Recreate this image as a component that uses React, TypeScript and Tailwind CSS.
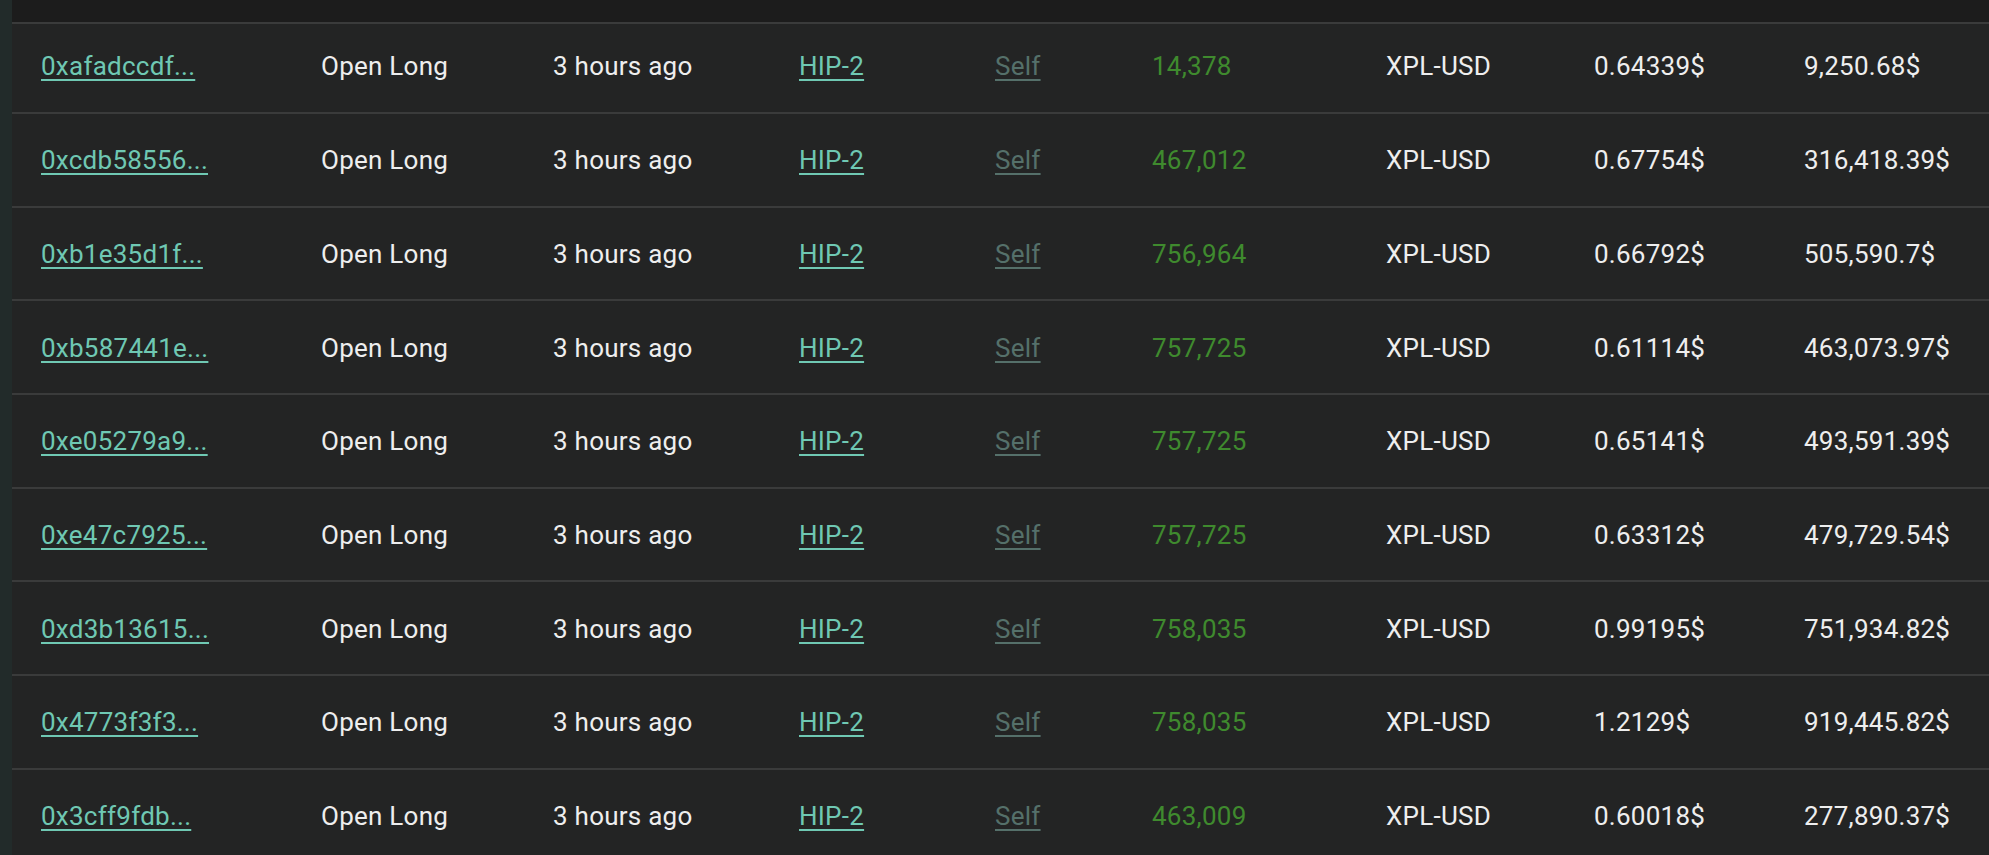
import React from "react";

type Row = {
  addr: string;
  size: string;
  price: string;
  total: string;
};

const rows: Row[] = [
  { addr: "0xafadccdf...", size: "14,378", price: "0.64339$", total: "9,250.68$" },
  { addr: "0xcdb58556...", size: "467,012", price: "0.67754$", total: "316,418.39$" },
  { addr: "0xb1e35d1f...", size: "756,964", price: "0.66792$", total: "505,590.7$" },
  { addr: "0xb587441e...", size: "757,725", price: "0.61114$", total: "463,073.97$" },
  { addr: "0xe05279a9...", size: "757,725", price: "0.65141$", total: "493,591.39$" },
  { addr: "0xe47c7925...", size: "757,725", price: "0.63312$", total: "479,729.54$" },
  { addr: "0xd3b13615...", size: "758,035", price: "0.99195$", total: "751,934.82$" },
  { addr: "0x4773f3f3...", size: "758,035", price: "1.2129$", total: "919,445.82$" },
  { addr: "0x3cff9fdb...", size: "463,009", price: "0.60018$", total: "277,890.37$" },
];

function Cells({ r }: { r: Row }) {
  return (
    <>
      <div className="w-[280px] shrink-0">
        <a className="text-[#6fc8b3] underline decoration-[1.5px] underline-offset-[4px]">{r.addr}</a>
      </div>
      <div className="w-[232px] shrink-0 text-[#eeeeee]">Open Long</div>
      <div className="w-[246px] shrink-0 text-[#eeeeee]">3 hours ago</div>
      <div className="w-[196px] shrink-0">
        <a className="text-[#6fc8b3] underline decoration-[1.5px] underline-offset-[4px]">HIP-2</a>
      </div>
      <div className="w-[157px] shrink-0">
        <a className="text-[#55706a] underline decoration-[1.5px] underline-offset-[4px]">Self</a>
      </div>
      <div className="w-[234px] shrink-0 text-[#3f8a2e]">{r.size}</div>
      <div className="w-[208px] shrink-0 text-[#eeeeee]">XPL-USD</div>
      <div className="w-[210px] shrink-0 text-[#eeeeee]">{r.price}</div>
      <div className="flex-1 text-[#eeeeee]">{r.total}</div>
    </>
  );
}

export default function App() {
  return (
    <div
      className="flex h-[855px] w-[1989px] overflow-hidden bg-[#232424] text-[26px] tracking-[0.25px]"
      style={{ fontFamily: "Roboto, 'Liberation Sans', sans-serif" }}
    >
      <div className="w-[12px] shrink-0 bg-[#222b2a]" />
      <div className="flex flex-1 flex-col">
        <div className="h-[24px] shrink-0 border-b-2 border-[#3a3b3b] bg-[#1c1c1c]" />
        <div className="flex h-[88px] shrink-0 items-center pb-[3px] pl-[29px]">
          <Cells r={rows[0]} />
        </div>
        {rows.slice(1).map((r, i) => (
          <div
            key={i}
            className="flex h-[93.7px] shrink-0 items-center border-t-2 border-[#3a3b3b] pt-[2px] pl-[29px]"
          >
            <Cells r={r} />
          </div>
        ))}
      </div>
    </div>
  );
}
